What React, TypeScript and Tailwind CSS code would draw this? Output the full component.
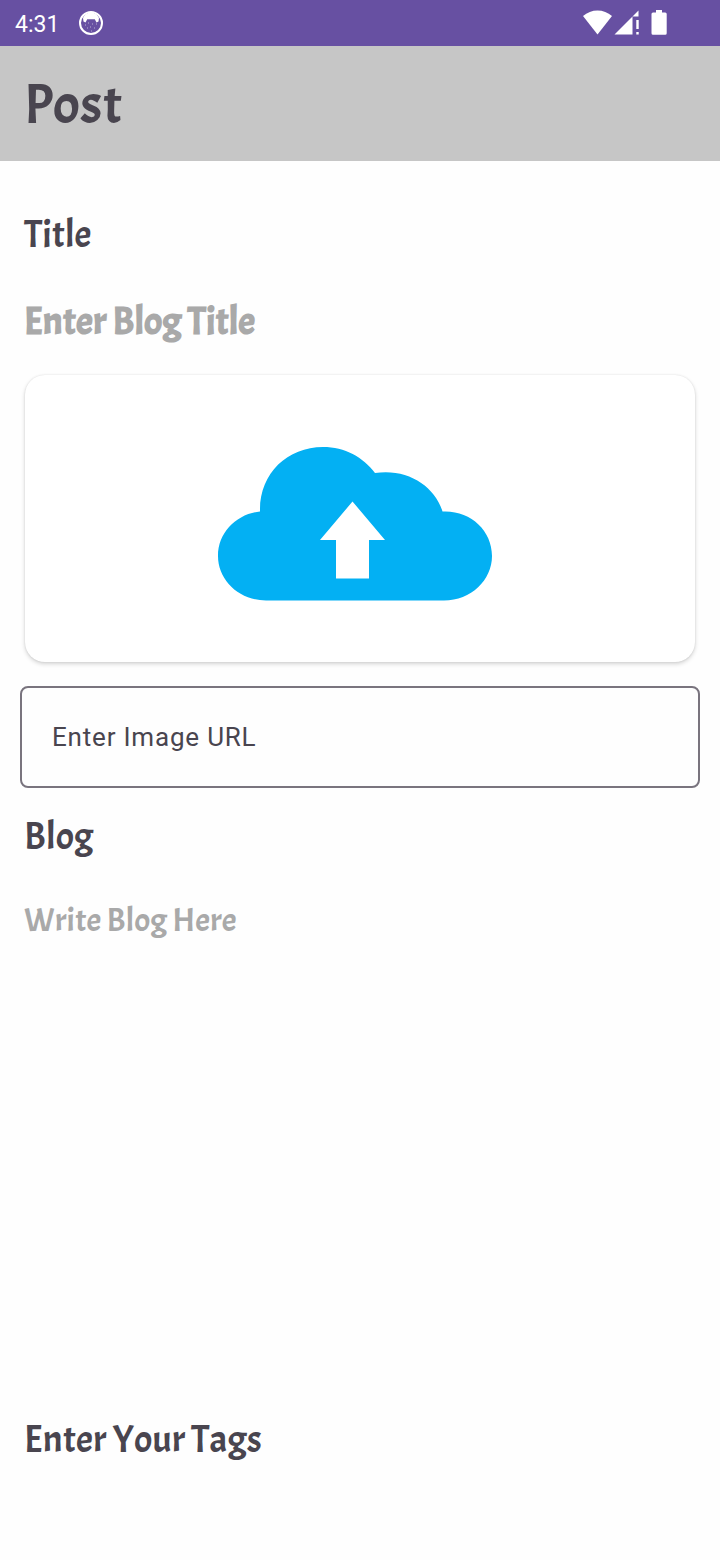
import clsx from "clsx";
import { ReactNode } from "react";

interface LabelProps {
  children: ReactNode;
  className?: string;
}

const Label = ({ children, className }: LabelProps) => (
  <div
    className={clsx(
      "w-max whitespace-nowrap font-['Acme','Lato',sans-serif]",
      className
    )}
  >
    {children}
  </div>
);

const StatusBar = () => (
  <div className="flex h-[46px] items-center bg-[#6750a2] pl-[15px] text-white">
    <span className="w-[64px] pt-[2px] font-['Roboto',sans-serif] text-[23px] leading-none">
      4:31
    </span>
    <svg width="24" height="26" viewBox="0 0 24 26" fill="none">
      <circle cx="12" cy="13" r="11" stroke="white" strokeWidth="2" />
      <path
        d="M4 8C6 4 9 2.5 12 2.5S18 4 20 8L19.5 11.5 17.5 12.5 15.8 9.3H8.2L6.5 12.5 4.5 11.5Z"
        fill="white"
      />
      <path
        d="M6 15h1M9 13h1M13 14h1M17 14h1M8 18h1M11 17h1M15 18h1M12 21h1"
        stroke="white"
        strokeOpacity="0.55"
      />
    </svg>
    <svg
      className="ml-auto mr-[51px]"
      width="86"
      height="26"
      viewBox="0 0 86 26"
      fill="white"
    >
      <path d="M0 6C8-1.5 21-1.5 29 6L14.5 24.5Z" />
      <path d="M31.5 24.5 55.5 .5V6.5H49.5V24.5Z" />
      <path d="M53.3 10h2.4v9h-2.4zM53.3 22h2.4v2.5h-2.4z" />
      <path d="M73 0h6v2.5h3.2q1.5 0 1.5 1.5V23.3q0 1.5-1.5 1.5H70q-1.5 0-1.5-1.5V4q0-1.5 1.5-1.5h3z" />
    </svg>
  </div>
);

const CloudUpload = () => (
  <svg width="274" height="154" viewBox="0 0 274 154">
    <path
      d="M48 153.5C21 153.5 0 133 0 109C0 85 19 67 42 64.5C41 27 69 0 105 0C127 0 145 10 157 26C189 21 217 39 224.5 64.5C252 63 274 83 274 109C274 133 253 153.5 226 153.5Z"
      fill="#03b0f3"
    />
    <path d="M134.5 54.5 167 93H151V131.5H118V93H102Z" fill="white" />
  </svg>
);

const App = () => {
  return (
    <main className="flex h-[1560px] w-[720px] flex-col bg-[#fefefe] text-[#49454f]">
      <StatusBar />
      <header className="flex h-[115px] items-center bg-[#c6c6c6] pt-[3px] pl-6">
        <Label className="text-[56.5px] leading-none">Post</Label>
      </header>

      <Label className="mt-[54px] ml-6 text-[37.8px] leading-10">Title</Label>
      <Label className="mt-[47px] ml-6 text-[38px] leading-10 font-bold text-[#a9a9a9]">
        Enter Blog Title
      </Label>

      <div className="mx-[25px] mt-[33px] flex h-[287px] justify-center rounded-[20px] bg-white pt-[72px] pr-[10px] shadow-[0_2px_4px_rgba(0,0,0,0.17),0_0_2px_rgba(0,0,0,0.1)]">
        <CloudUpload />
      </div>

      <div className="mx-5 mt-6 flex h-[102px] items-center rounded-lg border-2 border-[#79747e] pl-[30px] font-['Roboto',sans-serif] text-[26px] tracking-[0.8px]">
        Enter Image URL
      </div>

      <Label className="mt-[29px] ml-6 text-[38px] leading-10">Blog</Label>
      <Label className="mt-[43px] ml-6 text-[33.25px] leading-10 text-[#a9a9a9]">
        Write Blog Here
      </Label>

      <Label className="mt-[480px] ml-6 text-[38px] leading-10">
        Enter Your Tags
      </Label>
    </main>
  );
};

export default App;
